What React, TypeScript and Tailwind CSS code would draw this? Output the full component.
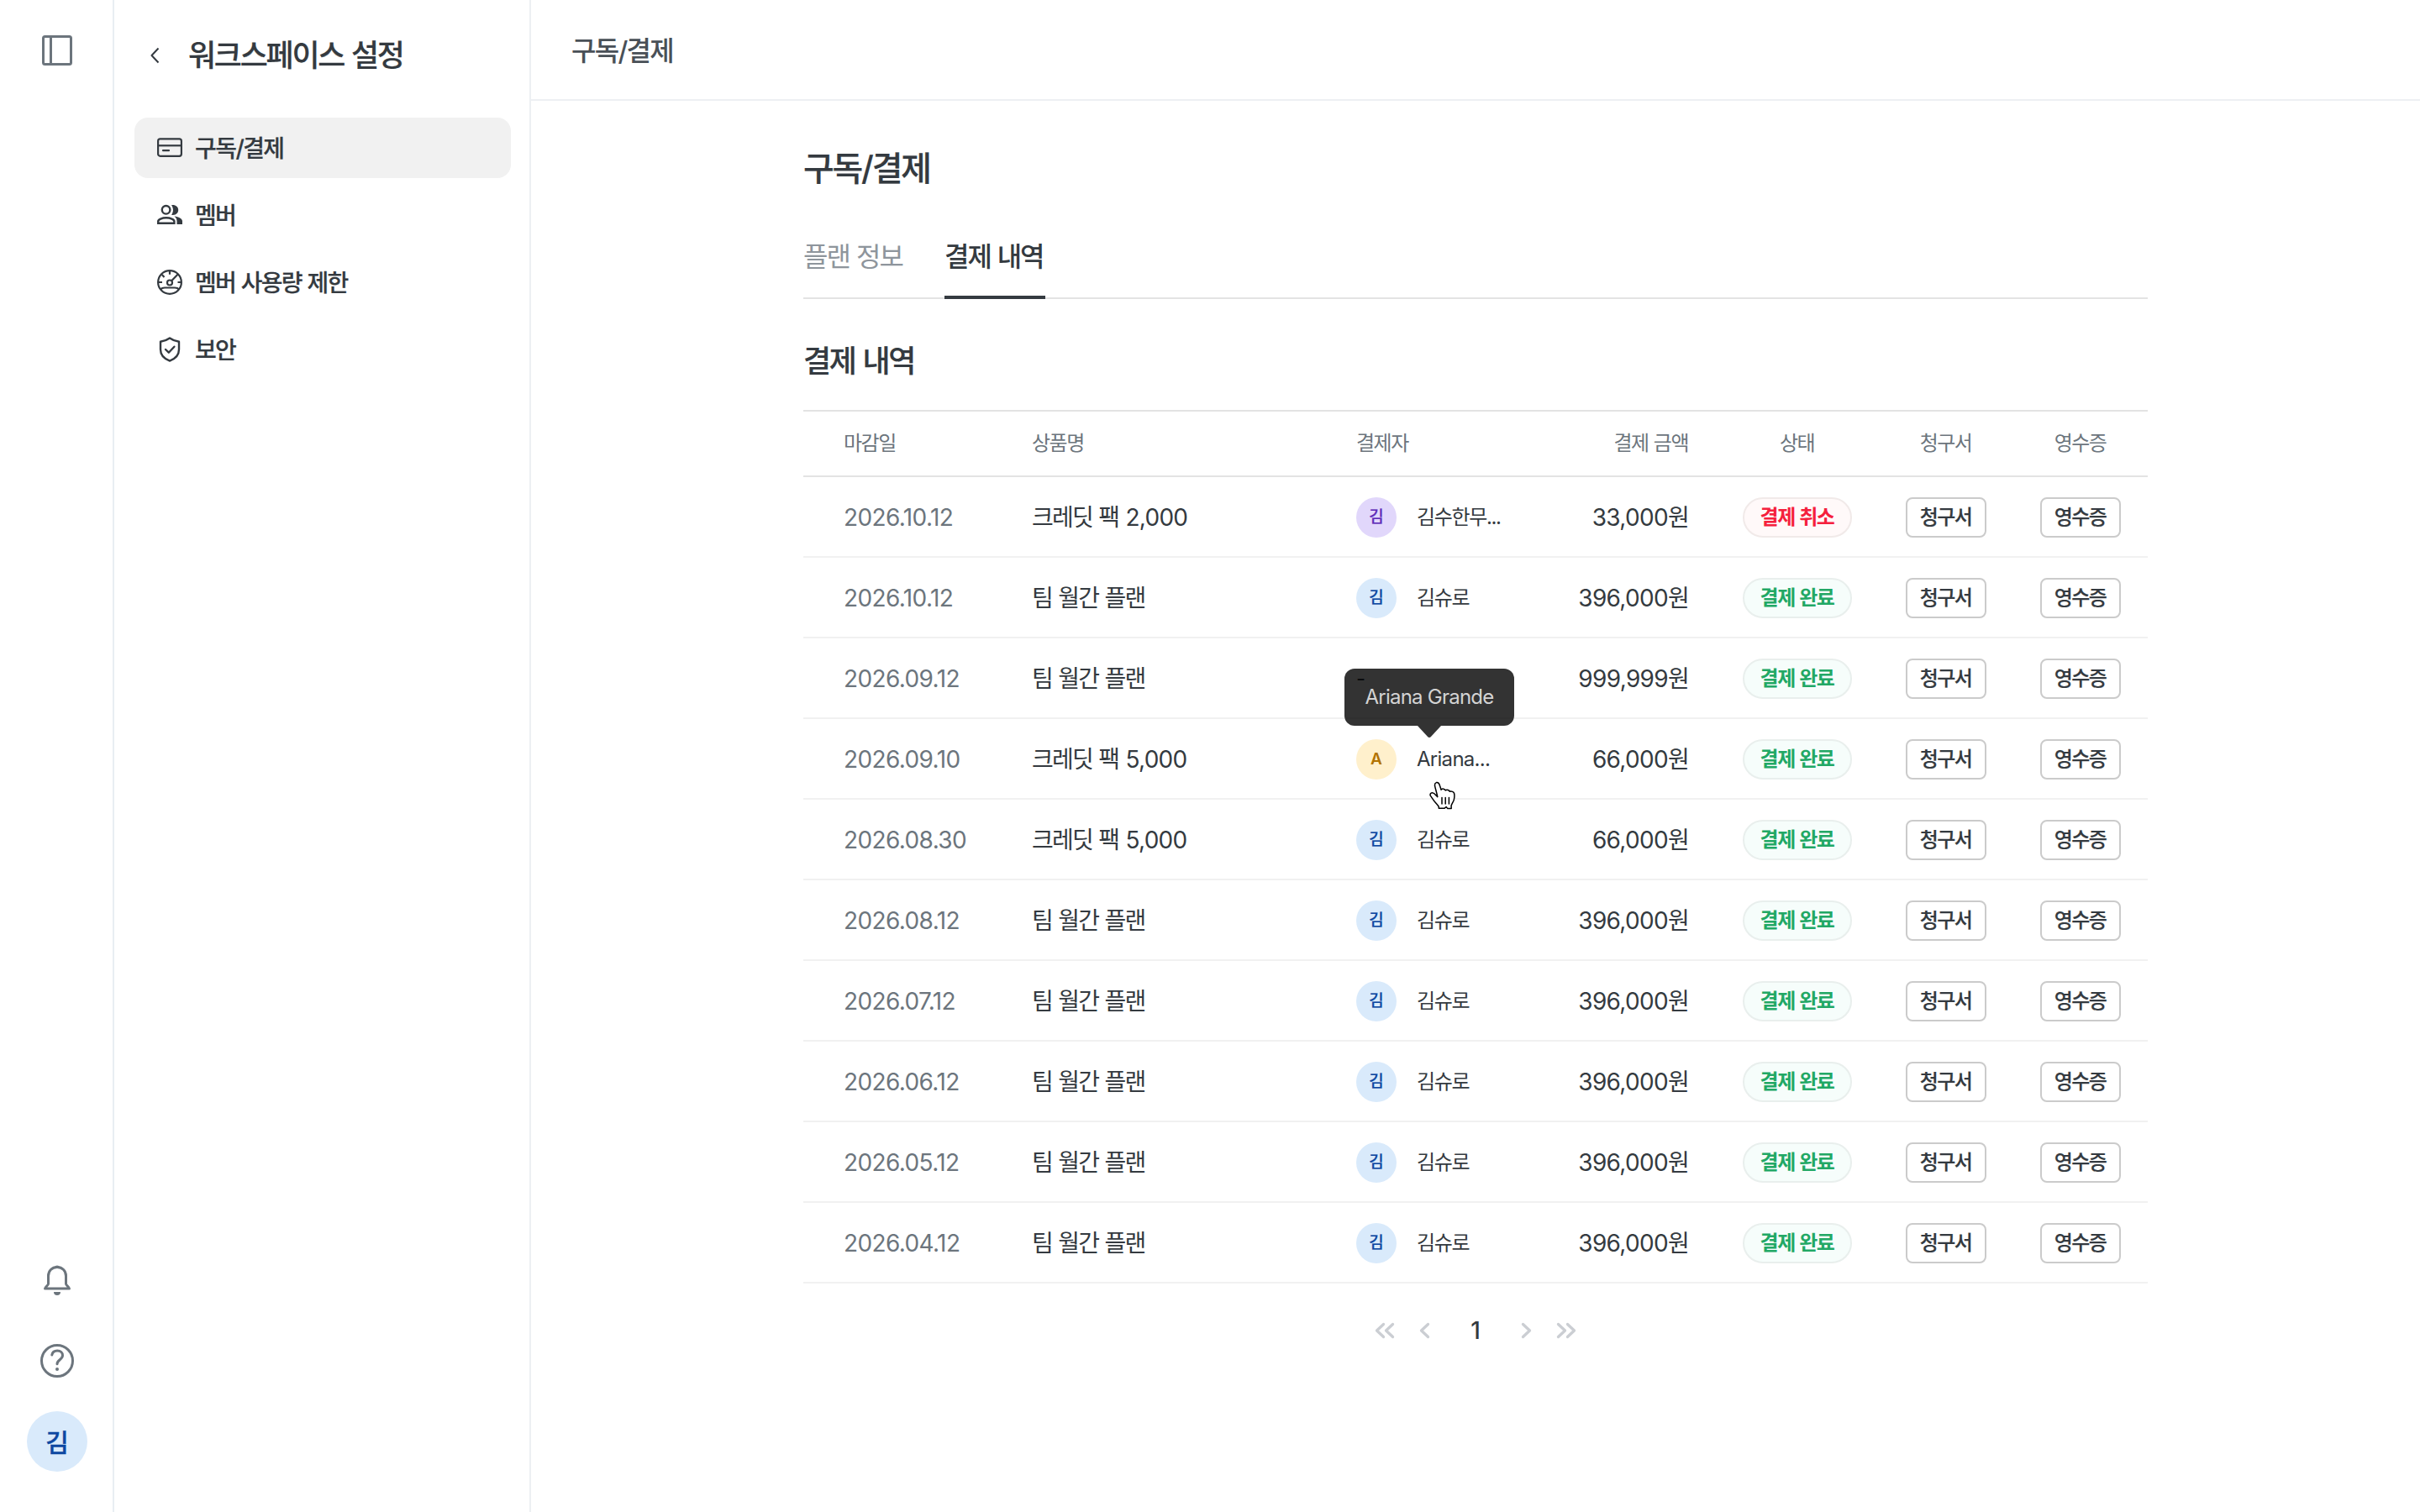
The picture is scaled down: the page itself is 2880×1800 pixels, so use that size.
import type { ReactNode } from "react";
import clsx from "clsx";

type Status = "done" | "canceled";
type Tone = "blue" | "purple" | "yellow";

interface Payment {
  date: string;
  product: string;
  credit?: string;
  payer?: { initial: string; name: string; tone: Tone; tooltip?: string };
  amount: string;
  status: Status;
}

const suro = { initial: "김", name: "김슈로", tone: "blue" as Tone };

const payments: Payment[] = [
  {
    date: "2026.10.12",
    product: "크레딧 팩",
    credit: "2,000",
    payer: { initial: "김", name: "김수한무...", tone: "purple" },
    amount: "33,000",
    status: "canceled",
  },
  { date: "2026.10.12", product: "팀 월간 플랜", payer: suro, amount: "396,000", status: "done" },
  { date: "2026.09.12", product: "팀 월간 플랜", amount: "999,999", status: "done" },
  {
    date: "2026.09.10",
    product: "크레딧 팩",
    credit: "5,000",
    payer: { initial: "A", name: "Ariana...", tone: "yellow", tooltip: "Ariana Grande" },
    amount: "66,000",
    status: "done",
  },
  { date: "2026.08.30", product: "크레딧 팩", credit: "5,000", payer: suro, amount: "66,000", status: "done" },
  { date: "2026.08.12", product: "팀 월간 플랜", payer: suro, amount: "396,000", status: "done" },
  { date: "2026.07.12", product: "팀 월간 플랜", payer: suro, amount: "396,000", status: "done" },
  { date: "2026.06.12", product: "팀 월간 플랜", payer: suro, amount: "396,000", status: "done" },
  { date: "2026.05.12", product: "팀 월간 플랜", payer: suro, amount: "396,000", status: "done" },
  { date: "2026.04.12", product: "팀 월간 플랜", payer: suro, amount: "396,000", status: "done" },
];

const toneClass: Record<Tone, string> = {
  blue: "bg-[#d9eafb] text-[#0d47a1]",
  purple: "bg-[#e1d7fb] text-[#5e2bb8]",
  yellow: "bg-[#fff0cc] text-[#b27300]",
};

const columns =
  "grid grid-cols-[272px_386px_200px_228px_194px_160px_160px] items-center";

// Hangul is set tighter than the latin digits
const hangul = "tracking-[-0.063em] [word-spacing:0.04em]";
const latin = "tracking-[-0.022em] [word-spacing:0]";
const semibold = "font-medium [-webkit-text-stroke:0.2px]";

function SidebarIcon() {
  return (
    <svg width="48" height="48" viewBox="0 0 48 48" fill="none" stroke="#6c757d" strokeWidth="3">
      <rect x="7.5" y="7.5" width="33" height="33" rx="2" />
      <path d="M16.5 7.5v33" />
    </svg>
  );
}

function BellIcon() {
  return (
    <svg width="48" height="48" viewBox="0 0 48 48" fill="none" stroke="#6c757d" strokeWidth="3" strokeLinejoin="round">
      <path d="M24 8.5c-6.2 0-10.5 4.6-10.5 10.5v9.500c0 1.200-4 4-4 5.500h29c0-1.500-4-4.300-4-5.500v-9.500c0-5.900-4.300-10.500-10.500-10.500z" />
      <path d="M20.800 8.800a3.400 3.400 0 0 1 6.400 0z" fill="#6c757d" stroke="none" />
      <path d="M20 38h8a4 4 0 0 1-8 0z" fill="#6c757d" stroke="none" />
    </svg>
  );
}

function HelpIcon() {
  return (
    <svg width="48" height="48" viewBox="0 0 48 48" fill="none" stroke="#6c757d" strokeWidth="3" strokeLinecap="round">
      <circle cx="24" cy="24" r="18.5" />
      <path d="M17.800 17c.6-3.400 3-5.100 6.400-5.100 3.900 0 6.300 2.500 6.300 5.600 0 5.200-6.500 5.300-6.500 10.300" />
      <circle cx="24" cy="34" r="2" fill="#6c757d" stroke="none" />
    </svg>
  );
}

function CardIcon() {
  return (
    <svg width="32" height="32" viewBox="0 0 32 32" fill="none" stroke="#343a40" strokeWidth="2.2">
      <rect x="2.1" y="5.4" width="27.8" height="20.4" rx="2.5" />
      <path d="M2 13.3h28" />
      <path d="M8 19.200h7" strokeLinecap="round" />
    </svg>
  );
}

function MembersIcon() {
  return (
    <svg width="32" height="32" viewBox="0 0 32 32" fill="none" stroke="#343a40" strokeWidth="2.4">
      <circle cx="11.6" cy="9.8" r="4.8" />
      <path d="M2.200 25.800v-2.300c0-2.300 4.600-4.200 9.600-4.200s9.600 1.900 9.600 4.200v2.300z" />
      <path
        d="M18 4.200c4.500-.8 8.200 1.900 8.200 5.900s-3.700 6.600-8.200 5.700c2.600-3.200 2.600-8.400 0-11.600zM21.500 17.600c5 .5 9.500 2.900 9.500 6v3.400h-6.500v-3.500c0-2.500-1-4.300-3-5.900z"
        fill="#343a40"
        stroke="none"
      />
    </svg>
  );
}

function GaugeIcon() {
  return (
    <svg width="32" height="32" viewBox="0 0 32 32" fill="none" stroke="#343a40" strokeWidth="2.2">
      <circle cx="16" cy="16" r="13.900" />
      <circle cx="16" cy="16.500" r="3" />
      <path d="M18.200 14.300l7.500-7.800M16 2.500v4.200M2.500 16h4.500M25.500 16H30M6.800 7l2.700 2.900" />
      <path d="M5 24.500c1.200-1.500 3-2 5-2h12c2 0 3.800.5 5 2" />
    </svg>
  );
}

function ShieldIcon() {
  return (
    <svg width="32" height="32" viewBox="0 0 32 32" fill="none" stroke="#343a40" strokeWidth="2.4" strokeLinejoin="round">
      <path d="M16 2.500c3.300 2.400 6.800 3.700 11 4.200v9.300c0 6-4.300 11.100-11 13.600-6.700-2.500-11-7.600-11-13.600V6.700c4.200-.5 7.700-1.800 11-4.200z" />
      <path d="M11 16l3.800 3.700 6.600-7" strokeLinecap="round" />
    </svg>
  );
}

function PointerCursor() {
  return (
    <svg
      className="absolute top-[43px] left-[14px] z-20"
      width="34"
      height="35"
      viewBox="0 0 34 35"
      fill="#fff"
      stroke="#000"
      strokeWidth="1.5"
      strokeLinejoin="round"
      strokeLinecap="round"
    >
      <path d="M12.400 32.300l-.3-2.300c-1.600-2.300-3.200-4-5-6-1.800-2.300-3.100-4.400-4.700-6.600-.9-1.700.2-3.500 2-3.700 1.500-.1 3.200 1.200 4.700 3.300l1.700 1.600c-.7-3.600-2-8-3-12-.6-2.300-.3-4.400 1.600-5 2-.5 3.300 1 4 3.400l1.700 5.200c.8-1.700 4.500-1.300 5.200.7 1.500-1.200 4.400-.4 5 1.400 1.700-.8 4.900.2 5.300 2.200.6 2.900.3 5.700-.5 8.300-.8 2.300-2.600 4.400-3 6.600l.1 3h-4.600l-1.500-1.900-2.200 1.800z" />
      <path d="M16 19.500v7.500M20.200 19.500v7.500M24.400 19.500v7.500" />
    </svg>
  );
}

function Chevron({ double, flip }: { double?: boolean; flip?: boolean }) {
  return (
    <svg
      className={clsx("size-12", flip && "rotate-180")}
      viewBox="0 0 48 48"
      fill="none"
      stroke="#cbced3"
      strokeWidth="3.3"
      strokeLinecap="round"
      strokeLinejoin="round"
    >
      {double ? (
        <path d="M22.500 16.500L14.500 24l8 7.500M33.500 16.500L25.500 24l8 7.500" />
      ) : (
        <path d="M27.500 16.500L19.500 24l8 7.500" />
      )}
    </svg>
  );
}

function NavItem({ icon, active, children }: { icon: ReactNode; active?: boolean; children: ReactNode }) {
  return (
    <a
      className={clsx(
        "flex h-[72px] items-center gap-[14px] rounded-2xl pl-[26px] text-[28px] text-[#343a40]",
        semibold,
        hangul,
        active && "bg-[#f1f1f1]",
      )}
    >
      {icon}
      <span className="pt-[3px]">{children}</span>
    </a>
  );
}

function Tooltip({ children }: { children: ReactNode }) {
  return (
    <div className="absolute bottom-[57px] left-[-86px] z-10 flex h-[68px] w-[202px] items-center justify-center rounded-xl bg-black/80 text-[24px] tracking-[-0.032em] whitespace-nowrap text-[#d3d3d3]">
      {children}
      <svg className="absolute top-full left-[87px]" width="28" height="14" viewBox="0 0 28 14">
        <path d="M0 0h28L16.200 12.800a3 3 0 0 1-4.400 0z" fill="#000" fillOpacity=".8" />
      </svg>
    </div>
  );
}

function Payer({ payer }: { payer: Payment["payer"] }) {
  if (!payer) return <span className="text-[24px] text-[#343a40]">-</span>;
  return (
    <div className="flex items-center gap-6">
      <span
        className={clsx(
          "flex size-12 items-center justify-center rounded-full text-[19px]",
          payer.tooltip ? "font-semibold" : semibold,
          toneClass[payer.tone],
        )}
      >
        <span className="pt-[1px]">{payer.initial}</span>
      </span>
      <div className="relative text-[24px] tracking-[-0.056em] text-[#343a40]">
        {payer.tooltip ? (
          <>
            <span className="tracking-[-0.03em]">{payer.name}</span>
            <Tooltip>{payer.tooltip}</Tooltip>
            <PointerCursor />
          </>
        ) : (
          payer.name
        )}
      </div>
    </div>
  );
}

function StatusBadge({ status }: { status: Status }) {
  return (
    <span
      className={clsx(
        "flex h-12 w-[130px] items-center justify-center rounded-full border-2 pr-[1px] text-[24px] font-semibold",
        hangul,
        status === "done"
          ? "border-[#e9efed] bg-[#f6fdfb] text-[#22a865]"
          : "border-[#f1eae9] bg-[#fff9f9] text-[#f5203d]",
      )}
    >
      {status === "done" ? "결제 완료" : "결제 취소"}
    </span>
  );
}

function DocButton({ children }: { children: ReactNode }) {
  return (
    <button
      className={clsx(
        "flex h-12 w-24 items-center justify-center rounded-lg border-2 border-[#cbcbcb] bg-white pr-[1px] text-[24px] text-[#343a40]",
        semibold,
        hangul,
      )}
    >
      {children}
    </button>
  );
}

function PaymentTable() {
  return (
    <div>
      <div
        className={clsx(
          columns,
          hangul,
          "h-20 border-y-2 border-[#e3e3e3] text-[24px] text-[#6c757d]",
        )}
      >
        <span className="pl-12">마감일</span>
        <span>상품명</span>
        <span>결제자</span>
        <span className="pr-[33px] text-right">결제 금액</span>
        <span className="pr-[1px] text-center">상태</span>
        <span className="pr-[1px] text-center">청구서</span>
        <span className="pr-[1px] text-center">영수증</span>
      </div>
      {payments.map((p) => (
        <div
          key={p.date + p.amount}
          className={clsx(columns, "h-24 border-b-2 border-[#f1f1f1] pt-[2px] text-[28px] text-[#343a40]")}
        >
          <span className={clsx("pt-[2px] pl-12 text-[#6c757d]", latin)}>{p.date}</span>
          <span className={clsx("pt-[2px]", hangul)}>
            {p.product}
            {p.credit && <span className="tracking-[-0.026em]"> {p.credit}</span>}
          </span>
          <Payer payer={p.payer} />
          <span className="pt-[2px] pr-[33px] text-right tracking-[-0.024em]">
            {p.amount}
            <span className={hangul}>원</span>
          </span>
          <div className="flex justify-center">
            <StatusBadge status={p.status} />
          </div>
          <div className="flex justify-center">
            <DocButton>청구서</DocButton>
          </div>
          <div className="flex justify-center">
            <DocButton>영수증</DocButton>
          </div>
        </div>
      ))}
    </div>
  );
}

export default function App() {
  return (
    <div className="flex h-[1800px] w-[2880px] overflow-hidden bg-white font-['Inter','Noto_Sans_CJK_KR',sans-serif] leading-[1.4]">
      <nav className="flex w-[136px] flex-col justify-between border-r-2 border-[#e9eef2] pt-9 pb-12 pl-8">
        <div className="flex w-[72px] justify-center">
          <SidebarIcon />
        </div>
        <div className="flex w-[72px] flex-col items-center">
          <BellIcon />
          <div className="mt-12 mb-9">
            <HelpIcon />
          </div>
          <span className="flex size-[72px] items-center justify-center rounded-full bg-[#d9eafb] pt-[2px] text-[30px] font-medium text-[#0d47a1] [-webkit-text-stroke:0.3px]">
            김
          </span>
        </div>
      </nav>

      <aside className="w-[496px] border-r-2 border-[#edf0f3] pt-10 pr-[22px] pl-6">
        <div className="mb-[50px] flex h-[50px] items-center">
          <svg className="mr-4 size-12" viewBox="0 0 48 48" fill="none" stroke="#343a40" strokeWidth="2" strokeLinejoin="round">
            <path d="M28.500 16.500L20.500 25l8 8.500" />
          </svg>
          <h1 className={clsx("pt-[3px] text-[36px] text-[#343a40]", semibold, hangul)}>워크스페이스 설정</h1>
        </div>
        <div className="flex flex-col gap-2">
          <NavItem icon={<CardIcon />} active>
            <span className="tracking-[-0.056em]">구독/결제</span>
          </NavItem>
          <NavItem icon={<MembersIcon />}>멤버</NavItem>
          <NavItem icon={<GaugeIcon />}>멤버 사용량 제한</NavItem>
          <NavItem icon={<ShieldIcon />}>보안</NavItem>
        </div>
      </aside>

      <main className="flex-1">
        <header className="flex h-[120px] items-center border-b-2 border-[#edf0f3] pt-1 pl-12 text-[32px] font-medium tracking-[-0.053em] text-[#495057]">
          구독/결제
        </header>
        <div className="mx-auto w-[1600px] pt-[52px]">
          <h2 className={clsx("flex h-14 items-center pt-[2px] text-[40px] tracking-[-0.056em] text-[#343a40]", semibold)}>
            구독/결제
          </h2>
          <div className={clsx("mt-12 flex h-20 gap-12 border-b-2 border-[#e3e3e3] text-[32px]", hangul)}>
            <span className="flex h-[60px] w-[120px] items-center text-[#8e959c]">플랜 정보</span>
            <span className="-mb-[2px] w-[120px] border-b-4 border-[#343a40] font-medium text-[#343a40]">
              <span className="flex h-[60px] items-center">결제 내역</span>
            </span>
          </div>
          <h3 className={clsx("mt-12 mb-[34px] flex h-[50px] items-center pt-[2px] text-[36px] text-[#343a40]", semibold, hangul)}>
            결제 내역
          </h3>
          <PaymentTable />
          <div className="mt-8 flex h-12 items-center justify-center">
            <Chevron double />
            <Chevron />
            <span className="w-[72px] pt-[2px] text-center text-[28px] font-medium text-[#343a40]">1</span>
            <Chevron flip />
            <Chevron double flip />
          </div>
        </div>
      </main>
    </div>
  );
}
